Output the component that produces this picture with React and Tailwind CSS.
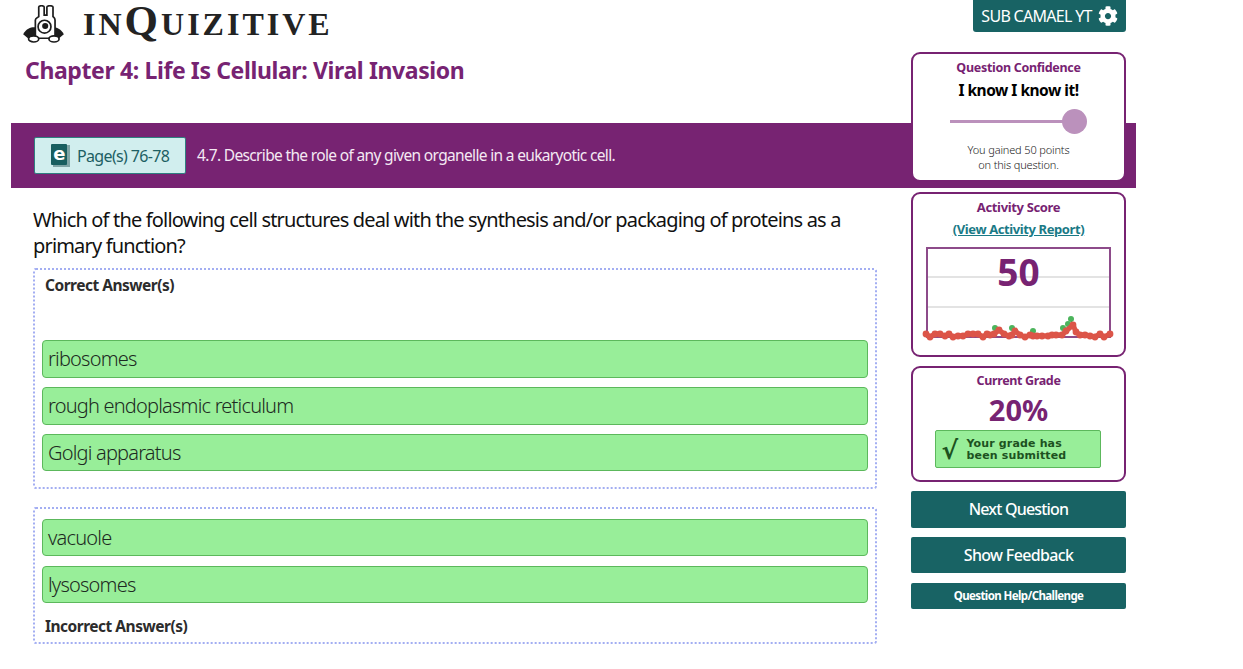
import React from "react";
import { FaCog } from "react-icons/fa";

const pts = [[926,334],[930,337],[935,334],[940,334],[945,336],[949,334],[953,337],[958,336],[963,336],[968,334],[973,334],[978,334],[983,337],[987,334],[990,335],[994,334],[999,330],[1004,334],[1009,336],[1012,335],[1015,331],[1020,335],[1025,337],[1030,335],[1033,336],[1037,336],[1042,336],[1048,336],[1052,335],[1056,335],[1062,335],[1066,331],[1073,325],[1076,332],[1080,335],[1085,335],[1090,336],[1095,337],[1100,334],[1104,337],[1110,334]];
const greens = [[995,328],[1012,328],[1033,331],[1063,328],[1068,324],[1071,319]];

function Logo() {
  return (
    <svg width="41" height="38" viewBox="0 0 120 112" className="shrink-0">
      <path d="M0 86 C12 66 26 64 40 66 L40 98 L14 98 Z" fill="#1c1c1c" />
      <path d="M120 86 C108 66 94 64 80 66 L80 98 L106 98 Z" fill="#1c1c1c" />
      <path d="M36 98 L36 44 C36 38 44 36 46 34 L46 6 C46 1 62 1 62 6 L62 30 L70 30 L70 6 C70 1 88 1 88 6 L88 34 C90 36 94 38 94 44 L94 98 Z" fill="#fff" stroke="#1c1c1c" strokeWidth="5" />
      <circle cx="63" cy="64" r="19" fill="#fff" stroke="#1c1c1c" strokeWidth="5" />
      <circle cx="65" cy="62" r="9" fill="#1c1c1c" />
      <ellipse cx="31" cy="100" rx="15" ry="9" fill="#fff" stroke="#1c1c1c" strokeWidth="5" />
      <ellipse cx="91" cy="100" rx="15" ry="9" fill="#fff" stroke="#1c1c1c" strokeWidth="5" />
    </svg>
  );
}

function BookIcon() {
  return (
    <svg width="19" height="23" viewBox="0 0 19 23" className="shrink-0">
      <rect x="2" y="1" width="17" height="22" fill="#7fa5a6" />
      <rect x="0" y="0" width="16" height="21" rx="1" fill="#185f60" />
      <text x="8" y="16" textAnchor="middle" fontSize="18" fontWeight="700" fontFamily="DejaVu Sans" fill="#fff">e</text>
    </svg>
  );
}

function Answer({ children, h = "h-[38px]" }) {
  return (
    <div className={`${h} flex items-center rounded-[4px] border border-[#5cb85c] bg-[#98ee99] pl-[5px] text-[20px] font-light tracking-[-0.8px] text-[#1d2a22]`}>
      {children}
    </div>
  );
}

function Card({ className, children }) {
  return <div className={`rounded-[9px] border-2 border-[#772372] bg-white ${className}`}>{children}</div>;
}

export default function App() {
  return (
    <div className="relative w-[1243px] h-[669px] overflow-hidden bg-white text-[#111] font-['Noto_Sans',sans-serif]">
      <div className="flex">
        <main className="ml-[11px] w-[900px] shrink-0">
          <div className="flex h-[45px] items-center pl-[12px] pt-[3px]">
            <Logo />
            <div className="ml-[19px] mb-[2px] flex items-baseline font-['Liberation_Serif',serif] font-bold tracking-[3px] text-[32px] leading-none text-[#232323]">
              <span>IN</span><span className="text-[43px] leading-[30px]">Q</span><span>UIZITIVE</span>
            </div>
          </div>
          <h1 className="ml-[14px] mt-[9px] h-[69px] text-[23px] leading-[32px] font-bold tracking-[-0.38px] text-[#772372]">Chapter 4: Life Is Cellular: Viral Invasion</h1>
          <div className="flex h-[65px] w-[1125px] items-center bg-[#772372] pl-[23px]">
            <div className="flex h-[37px] w-[152px] items-center rounded-[2px] border border-[#2f7f80] bg-[#d1eeee] pl-[16px] text-[16px] tracking-[-0.65px] text-[#1d5f63]">
              <BookIcon />
              <span className="ml-[7px]">Page(s) 76-78</span>
            </div>
            <span className="ml-[11px] text-[15.5px] tracking-[-0.66px] text-[#f4e9f3]">4.7. Describe the role of any given organelle in a eukaryotic cell.</span>
          </div>
          <div className="ml-[22px] mr-[34px]">
            <p className="mt-[19px] text-[20px] leading-[26px] tracking-[-0.83px] text-[#111]">Which of the following cell structures deal with the synthesis and/or packaging of proteins as a primary function?</p>
            <section className="mt-[9px] h-[221px] rounded-[3px] border-2 border-dotted border-[#a3aef2] px-[7px]">
              <div className="ml-[3px] mt-[5px] h-[65px] text-[15.5px] leading-[20px] font-bold tracking-[-0.5px] text-[#2c2c2c]">Correct Answer(s)</div>
              <div className="flex flex-col gap-[9px]">
                <Answer>ribosomes</Answer>
                <Answer>rough endoplasmic reticulum</Answer>
                <Answer h="h-[37px]">Golgi apparatus</Answer>
              </div>
            </section>
            <section className="mt-[18px] h-[137px] rounded-[3px] border-2 border-dotted border-[#a3aef2] px-[7px] pt-[10px]">
              <div className="flex flex-col gap-[10px]">
                <Answer h="h-[37px]">vacuole</Answer>
                <Answer h="h-[37px]">lysosomes</Answer>
              </div>
              <div className="ml-[3px] mt-[13px] text-[15.5px] leading-[20px] font-bold tracking-[-0.5px] text-[#2c2c2c]">Incorrect Answer(s)</div>
            </section>
          </div>
        </main>
        <aside className="relative z-10 flex w-[215px] shrink-0 flex-col items-stretch">
          <div className="ml-auto flex h-[32px] w-[153px] items-center justify-center gap-[6px] rounded-b-[3px] bg-[#186364] text-[16px] tracking-[-0.7px] text-white">
            SUB CAMAEL YT <FaCog className="text-[20px]" />
          </div>
          <Card className="mt-[20px] h-[130px] flex flex-col items-center pt-[5px]">
            <div className="text-[12.5px] leading-[18px] font-bold tracking-[-0.3px] text-[#772372]">Question Confidence</div>
            <div className="mt-[2px] text-[15.5px] leading-[22px] font-bold tracking-[-0.5px] text-black">I know I know it!</div>
            <div className="relative mr-[12px] mt-[19px] h-[3px] w-[125px] bg-[#bb91bc]">
              <div className="absolute right-[-12px] top-[-11px] h-[25px] w-[25px] rounded-full bg-[#bb91bc]" />
            </div>
            <div className="mt-[19px] text-center text-[11px] leading-[15px] font-light tracking-[-0.15px] text-[#222]">You gained 50 points<br />on this question.</div>
          </Card>
          <Card className="mt-[10px] h-[165px] flex flex-col items-center pt-[4px]">
            <div className="text-[13px] leading-[18px] font-bold tracking-[-0.35px] text-[#772372]">Activity Score</div>
            <a className="mt-[4px] text-[13px] leading-[18px] font-bold tracking-[-0.4px] text-[#1a7a86] underline">(View Activity Report)</a>
            <div className="relative mt-[9px] h-[91px] w-[185px] border-2 border-[#8d4b8a]">
              <div className="mt-[27px] h-[2px] bg-[#e3e3e3]" />
              <div className="mt-[28px] h-[2px] bg-[#e3e3e3]" />
              <div className="absolute inset-x-0 top-[1px] text-center text-[37px] leading-[44px] font-bold text-[#772372]">50</div>
              <svg width="189" height="50" viewBox="924 296 189 50" className="absolute left-[-4px] top-[47px] overflow-visible">
                {greens.map(([x, y]) => <line key={x} x1={x} y1={y} x2={x + 1} y2={y + 5} stroke="#111" strokeWidth="1" />)}
                {greens.map(([x, y]) => <circle key={x} cx={x} cy={y} r="3" fill="#4cb45c" />)}
                <polyline points={pts.map((p) => p.join(",")).join(" ")} fill="none" stroke="#dc5548" strokeWidth="5" strokeLinejoin="round" />
                {pts.map(([x, y]) => <circle key={x} cx={x} cy={y} r="3.4" fill="#dc5548" />)}
              </svg>
            </div>
          </Card>
          <Card className="mt-[9px] h-[116px] flex flex-col items-center pt-[4px]">
            <div className="text-[12.5px] leading-[18px] font-bold tracking-[-0.35px] text-[#772372]">Current Grade</div>
            <div className="mt-[3px] text-[29px] leading-[34px] font-bold text-[#772372]">20%</div>
            <div className="mt-[3px] mr-[2px] flex h-[38px] w-[166px] items-center rounded-[2px] border border-[#5cb85c] bg-[#98ee99] pl-[6px] text-[#1d521f]">
              <span className="w-[25px] font-['DejaVu_Sans',sans-serif] text-[25px] leading-none font-bold pt-[3px]">√</span>
              <span className="pt-[2px] font-['DejaVu_Sans',sans-serif] text-[11px] leading-[12.5px] font-bold tracking-[0.15px]">Your grade has<br />been submitted</span>
            </div>
          </Card>
          <button className="mt-[9px] h-[37px] rounded-[2px] bg-[#186364] pb-[2px] text-[16px] font-medium tracking-[-0.8px] text-white">Next Question</button>
          <button className="mt-[9px] h-[36px] rounded-[2px] bg-[#186364] text-[16px] font-medium tracking-[-0.65px] text-white">Show Feedback</button>
          <button className="mt-[10px] h-[26px] rounded-[2px] bg-[#186364] text-[11.5px] font-bold tracking-[-0.6px] text-white">Question Help/Challenge</button>
        </aside>
      </div>
    </div>
  );
}
